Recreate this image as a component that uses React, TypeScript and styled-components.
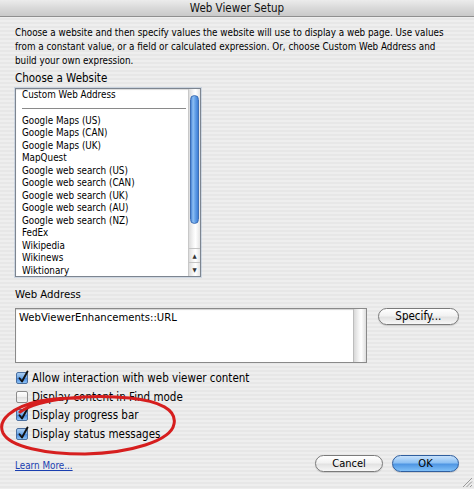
import React from "react";
import styled, { createGlobalStyle } from "styled-components";

const FONT = `"DejaVu Sans Condensed", "Liberation Sans", sans-serif`;

const Global = createGlobalStyle`
  html, body { margin: 0; padding: 0; background: #ececec; }
  body { font-family: ${FONT}; color: #000; }
  * { box-sizing: border-box; }
`;

const Window = styled.div`
  position: relative;
  width: 474px;
  height: 489px;
  overflow: hidden;
  display: flex;
  flex-direction: column;
  background: repeating-linear-gradient(
    to bottom,
    #eeeeee 0px,
    #eeeeee 2px,
    #e7e7e7 2px,
    #e7e7e7 4px
  );
  font-family: ${FONT};
`;

const TitleBar = styled.div`
  height: 17px;
  line-height: 17px;
  text-align: center;
  font-size: 11.5px;
  color: #111;
  background: linear-gradient(to bottom, #ececec 0%, #d9d9d9 50%, #c9c9c9 100%);
  border-bottom: 1px solid #8f8f8f;
  flex: none;
`;

const Body = styled.div`
  padding: 9px 15px 0 15px;
  display: flex;
  flex-direction: column;
  flex: 1;
`;

const Description = styled.div`
  font-size: 9.8px;
  line-height: 14px;
  white-space: nowrap;
`;

const Heading = styled.div`
  font-size: 11.5px;
  line-height: 14px;
  margin-top: 3px;
`;

const Label = styled.div`
  font-size: 11.3px;
  line-height: 14px;
  margin-top: 11px;
`;

const ListBox = styled.div`
  margin-top: 3px;
  width: 186px;
  height: 189px;
  border: 1px solid #7d8590;
  box-shadow: inset 0 1px 1px rgba(0, 0, 0, 0.15), 0 0 0 1px rgba(150, 175, 205, 0.35);
  background: #fff;
  display: flex;
`;

const ListItems = styled.div`
  flex: 1;
  overflow: hidden;
`;

const ListItem = styled.div`
  font-size: 9.8px;
  line-height: 12.5px;
  height: 12.5px;
  padding-left: 6px;
  white-space: nowrap;
`;

const Separator = styled.div`
  height: 13px;
  display: flex;
  align-items: center;
  padding: 0 2px 0 6px;
  &::after {
    content: "";
    display: block;
    height: 1px;
    flex: 1;
    background: #8a8a8a;
  }
`;

const ScrollBar = styled.div`
  width: 12px;
  flex: none;
  display: flex;
  flex-direction: column;
  border-left: 1px solid #c8c8c8;
  background: linear-gradient(to right, #dcdcdc, #f6f6f6 40%, #ffffff 60%, #e4e4e4);
`;

const ScrollTrack = styled.div`
  flex: 1;
  padding: 6px 1px 0 1px;
`;

const Thumb = styled.div`
  height: 129px;
  border-radius: 6px;
  border: 1px solid #3e6fb5;
  background: linear-gradient(
    to right,
    #4c86d6 0%,
    #8ec0f4 30%,
    #6aa5ea 55%,
    #3f7fd6 100%
  );
`;

const Arrow = styled.div`
  height: 14px;
  display: flex;
  align-items: center;
  justify-content: center;
  border-top: 1px solid #c4c4c4;
  font-size: 6px;
  color: #333;
`;

const AddressRow = styled.div`
  margin-top: 6px;
  display: flex;
  align-items: flex-start;
  gap: 11px;
`;

const TextArea = styled.div`
  width: 354px;
  height: 55px;
  border: 1px solid #8a8a8a;
  box-shadow: inset 0 1px 1px rgba(0, 0, 0, 0.18);
  background: #fff;
  display: flex;
`;

const TextAreaText = styled.div`
  flex: 1;
  padding: 2px 3px;
  font-size: 11.2px;
  line-height: 14px;
`;

const TextAreaScroll = styled.div`
  width: 13px;
  border-left: 1px solid #bdbdbd;
  background: linear-gradient(to right, #d8d8d8, #f4f4f4 40%, #ffffff 60%, #dedede);
`;

const Pill = styled.button<{ $primary?: boolean; $w: number; $fs?: number }>`
  width: ${(p) => p.$w}px;
  height: 17px;
  padding: 0;
  border-radius: 9px;
  font-family: ${FONT};
  font-size: ${(p) => p.$fs ?? 11}px;
  line-height: 15px;
  color: #000;
  cursor: default;
  border: 1px solid ${(p) => (p.$primary ? "#2f5e9e" : "#7a7a7a")};
  background: ${(p) =>
    p.$primary
      ? "linear-gradient(to bottom, #c7e1fb 0%, #8cc0f3 45%, #4f96e3 55%, #7fc0f8 100%)"
      : "linear-gradient(to bottom, #ffffff 0%, #f2f2f2 45%, #e2e2e2 55%, #f7f7f7 100%)"};
  box-shadow: 0 1px 1px rgba(0, 0, 0, 0.15);
`;

const Checks = styled.div`
  margin-top: 6px;
  display: flex;
  flex-direction: column;
`;

const CheckRow = styled.div`
  height: 18.6px;
  display: flex;
  align-items: center;
  gap: 4px;
  font-size: 11.5px;
  padding-left: 1px;
`;

const Box = styled.span<{ $on: boolean }>`
  position: relative;
  width: 12px;
  height: 12px;
  flex: none;
  border-radius: 2px;
  border: 1px solid ${(p) => (p.$on ? "#4a6f9f" : "#8c8c8c")};
  background: ${(p) =>
    p.$on
      ? "linear-gradient(to bottom, #a9cdf2 0%, #6ea7e6 50%, #4b8be0 55%, #8cc2f5 100%)"
      : "linear-gradient(to bottom, #ffffff 0%, #f0f0f0 50%, #e2e2e2 55%, #f6f6f6 100%)"};
  svg {
    position: absolute;
    left: 0px;
    top: -3px;
  }
`;

const Footer = styled.div`
  margin-top: 12px;
  display: flex;
  align-items: center;
`;

const LearnMore = styled.a`
  font-size: 9.8px;
  color: #1a3fb0;
  text-decoration: underline;
  padding-top: 4px;
  flex: 1;
`;

const Buttons = styled.div`
  display: flex;
  gap: 9px;
`;

const Overlay = styled.svg`
  position: absolute;
  left: 0;
  top: 0;
  pointer-events: none;
`;

const Grip = styled.svg`
  position: absolute;
  right: 1px;
  bottom: 1px;
`;

function Check({ on, children }: { on: boolean; children: React.ReactNode }) {
  return (
    <CheckRow>
      <Box $on={on}>
        {on && (
          <svg width="13" height="14" viewBox="0 0 13 14">
            <path
              d="M2.5 8.2 L5 11.5 L10.5 1.5"
              fill="none"
              stroke="#111"
              strokeWidth="1.9"
              strokeLinecap="round"
              strokeLinejoin="round"
            />
          </svg>
        )}
      </Box>
      <span>{children}</span>
    </CheckRow>
  );
}

const sites = [
  "Google Maps (US)",
  "Google Maps (CAN)",
  "Google Maps (UK)",
  "MapQuest",
  "Google web search (US)",
  "Google web search (CAN)",
  "Google web search (UK)",
  "Google web search (AU)",
  "Google web search (NZ)",
  "FedEx",
  "Wikipedia",
  "Wikinews",
  "Wiktionary",
];

export default function App() {
  return (
    <>
      <Global />
      <Window>
        <TitleBar>Web Viewer Setup</TitleBar>
        <Body>
          <Description>
            <div>Choose a website and then specify values the website will use to display a web page. Use values</div>
            <div>from a constant value, or a field or calculated expression. Or, choose Custom Web Address and</div>
            <div>build your own expression.</div>
          </Description>
          <Heading>Choose a Website</Heading>
          <ListBox>
            <ListItems>
              <ListItem>Custom Web Address</ListItem>
              <Separator />
              {sites.map((s) => (
                <ListItem key={s}>{s}</ListItem>
              ))}
            </ListItems>
            <ScrollBar>
              <ScrollTrack>
                <Thumb />
              </ScrollTrack>
              <Arrow>▲</Arrow>
              <Arrow>▼</Arrow>
            </ScrollBar>
          </ListBox>
          <Label>Web Address</Label>
          <AddressRow>
            <TextArea>
              <TextAreaText>WebViewerEnhancements::URL</TextAreaText>
              <TextAreaScroll />
            </TextArea>
            <Pill $w={82} $fs={11.5}>Specify...</Pill>
          </AddressRow>
          <Checks>
            <Check on>Allow interaction with web viewer content</Check>
            <Check on={false}>Display content in Find mode</Check>
            <Check on>Display progress bar</Check>
            <Check on>Display status messages</Check>
          </Checks>
          <Footer>
            <LearnMore href="#">Learn More...</LearnMore>
            <Buttons>
              <Pill $w={68}>Cancel</Pill>
              <Pill $w={67} $primary>
                OK
              </Pill>
            </Buttons>
          </Footer>
        </Body>
        <Overlay width="474" height="489" viewBox="0 0 474 489">
          <path
            d="M20 412 C 40 398, 90 394, 130 398 C 160 401, 177 410, 174 424 C 171 441, 130 453, 85 454 C 45 454, 10 447, 3 433 C -3 420, 12 407, 40 401 C 55 398, 70 398, 80 398"
            fill="none"
            stroke="#d61e1e"
            strokeWidth="3"
            strokeLinecap="round"
          />
        </Overlay>
        <Grip width="11" height="11" viewBox="0 0 11 11">
          <path d="M10 1 L1 10 M10 4.5 L4.5 10 M10 8 L8 10" stroke="#9a9a9a" strokeWidth="1" />
        </Grip>
      </Window>
    </>
  );
}
